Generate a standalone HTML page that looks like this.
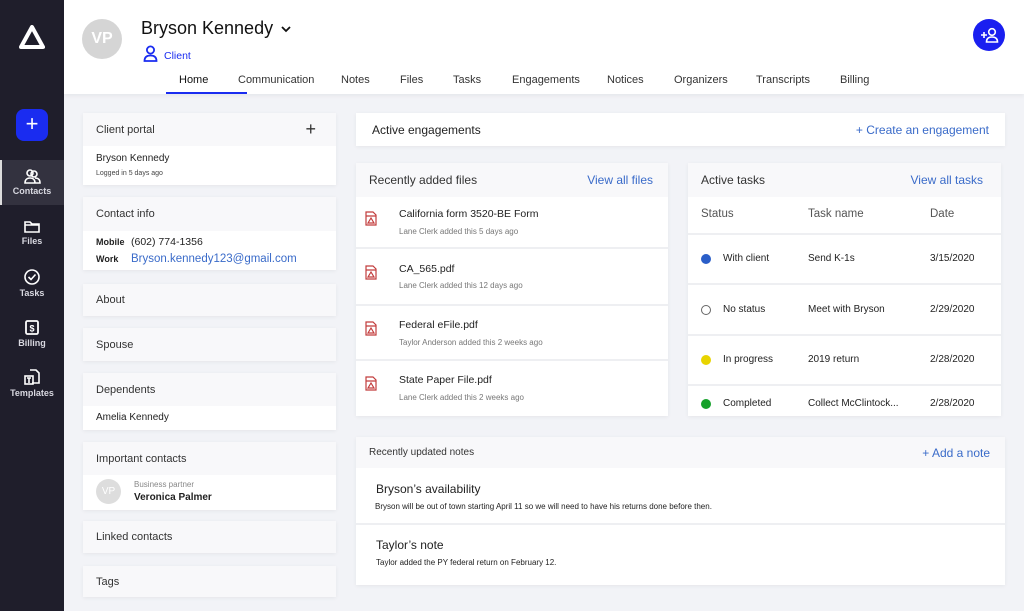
<!DOCTYPE html>
<html><head><meta charset="utf-8"><style>
*{margin:0;padding:0;box-sizing:border-box}
body{width:1024px;height:611px;overflow:hidden;background:#f2f3f7;font-family:"Liberation Sans",sans-serif;color:#222;position:relative}
.a{position:absolute}
.side{left:0;top:0;width:64px;height:611px;background:#1f1e2b}
.nav{position:absolute;left:0;width:64px;text-align:center;color:#d8d8e0;font-size:9px;font-weight:bold}
.nav svg{display:block;margin:0 auto 2px}
.hdr{left:64px;top:0;width:960px;height:94px;background:#fff;box-shadow:0 2px 4px rgba(0,0,0,.05)}
.tab{position:absolute;top:74px;font-size:11px;color:#333}
.card{position:absolute;background:#fff;box-shadow:0 1px 4px rgba(0,0,0,.06)}
.ch{background:#f8f8fa;font-size:11px;color:#333;padding-left:13px;display:flex;align-items:center}
.blue{color:#3a6bc9}
.row{position:absolute;left:0;right:0;border-top:2px solid #eeeff2}
.ft{position:absolute;left:43px;font-size:10.5px;color:#222}
.fs{position:absolute;left:43px;font-size:8px;color:#777}
.dot{position:absolute;left:13px;width:10px;height:10px;border-radius:50%}
.tc{position:absolute;font-size:10px;color:#222}
</style></head><body>
<div class="a side">
 <svg class="a" style="left:19px;top:25px" width="26" height="24" viewBox="0 0 26 24"><path d="M13 2 L24 22 L2 22 Z" fill="none" stroke="#fff" stroke-width="4" stroke-linejoin="round"/></svg>
 <div class="a" style="left:16px;top:109px;width:32px;height:32px;border-radius:8px;background:#1a2cf0;color:#fff;font-size:22px;text-align:center;line-height:30px">+</div>
 <div class="a" style="left:0;top:160px;width:64px;height:45px;background:#33323f;border-left:2px solid #ddd"></div>
 <div class="nav" style="top:168px"><svg width="18" height="16" viewBox="0 0 18 16" fill="none" stroke="#fff" stroke-width="1.6"><circle cx="7" cy="5" r="3"/><circle cx="11" cy="6" r="3"/><path d="M2 15c0-4 3-5 5-5s5 1 5 5zM12 10c3 0 5 1 5 5h-5"/></svg>Contacts</div>
 <div class="nav" style="top:218px"><svg width="18" height="16" viewBox="0 0 18 16" fill="none" stroke="#fff" stroke-width="1.6"><path d="M2 4h5l2 2h7v8H2z M2 7h14"/></svg>Files</div>
 <div class="nav" style="top:268px"><svg width="18" height="18" viewBox="0 0 18 18" fill="none" stroke="#fff" stroke-width="1.6"><circle cx="9" cy="9" r="7"/><path d="M5.5 9l2.5 2.5 4.5-5"/></svg>Tasks</div>
 <div class="nav" style="top:319px"><svg width="18" height="17" viewBox="0 0 18 17" fill="none" stroke="#fff" stroke-width="1.8"><rect x="3" y="2" width="12" height="13" rx="1.5"/><text x="9" y="12.5" font-size="9" fill="#fff" stroke="none" text-anchor="middle" font-family="Liberation Sans" font-weight="bold">$</text></svg>Billing</div>
 <div class="nav" style="top:368px"><svg width="18" height="18" viewBox="0 0 18 18" fill="none" stroke="#fff" stroke-width="1.6"><path d="M7 2h6l3 3v10H9"/><rect x="2" y="8" width="8" height="8"/><path d="M4 10h4M6 10v5"/></svg>Templates</div>
</div>
<div class="a hdr">
 <div class="a" style="left:18px;top:19px;width:40px;height:40px;border-radius:50%;background:#d5d5d5;color:#fff;font-weight:bold;font-size:16px;text-align:center;line-height:40px">VP</div>
 <div class="a" style="left:77px;top:18px;font-size:18px;color:#111">Bryson Kennedy</div>
 <svg class="a" style="left:217px;top:25px" width="10" height="8" viewBox="0 0 10 8"><path d="M1 2l4 4 4-4" stroke="#111" stroke-width="1.8" fill="none"/></svg>
 <svg class="a" style="left:79px;top:45px" width="15" height="17" viewBox="0 0 15 17" fill="none" stroke="#1a2cf0" stroke-width="1.8"><circle cx="7.5" cy="5" r="3.6"/><path d="M1.5 16c0-4 2.5-5.5 6-5.5s6 1.5 6 5.5z"/></svg>
 <div class="a" style="left:100px;top:50px;font-size:10.5px;color:#1a2cf0">Client</div>
 <div class="a" style="left:909px;top:19px;width:32px;height:32px;border-radius:50%;background:#1a1ff0"><svg width="32" height="32" viewBox="0 0 32 32" fill="none" stroke="#fff" stroke-width="1.6"><path d="M8 16h6M11 13v6"/><circle cx="19" cy="13" r="3.3"/><path d="M13.5 23c0-4 2.5-5 5.5-5s5.5 1 5.5 5z"/></svg></div>
 <div class="tab" style="left:115px;color:#111">Home</div>
 <div class="a" style="left:102px;top:92px;width:81px;height:2px;background:#1a2cf0"></div>
 <div class="tab" style="left:174px">Communication</div>
 <div class="tab" style="left:277px">Notes</div>
 <div class="tab" style="left:336px">Files</div>
 <div class="tab" style="left:389px">Tasks</div>
 <div class="tab" style="left:448px">Engagements</div>
 <div class="tab" style="left:543px">Notices</div>
 <div class="tab" style="left:610px">Organizers</div>
 <div class="tab" style="left:692px">Transcripts</div>
 <div class="tab" style="left:776px">Billing</div>
</div>
<!-- left column -->
<div class="card" style="left:83px;top:113px;width:253px;height:72px">
 <div class="ch" style="height:33px">Client portal<span style="position:absolute;right:20px;font-size:18px;font-weight:300">+</span></div>
 <div class="a" style="left:13px;top:40px;font-size:10px">Bryson Kennedy</div>
 <div class="a" style="left:13px;top:57px;font-size:7px;color:#444">Logged in 5 days ago</div>
</div>
<div class="card" style="left:83px;top:197px;width:253px;height:73px">
 <div class="ch" style="height:34px">Contact info</div>
 <div class="a" style="left:13px;top:40px;font-size:9px;font-weight:bold">Mobile</div>
 <div class="a" style="left:48px;top:39px;font-size:10.5px">(602) 774-1356</div>
 <div class="a" style="left:13px;top:57px;font-size:9px;font-weight:bold">Work</div>
 <div class="a blue" style="left:48px;top:56px;font-size:11.5px">Bryson.kennedy123@gmail.com</div>
</div>
<div class="card ch" style="left:83px;top:284px;width:253px;height:32px">About</div>
<div class="card ch" style="left:83px;top:328px;width:253px;height:33px">Spouse</div>
<div class="card" style="left:83px;top:373px;width:253px;height:57px">
 <div class="ch" style="height:33px">Dependents</div>
 <div class="a" style="left:13px;top:39px;font-size:10px">Amelia Kennedy</div>
</div>
<div class="card" style="left:83px;top:442px;width:253px;height:68px">
 <div class="ch" style="height:33px">Important contacts</div>
 <div class="a" style="left:13px;top:37px;width:25px;height:25px;border-radius:50%;background:#ddd;color:#fff;font-size:10px;text-align:center;line-height:25px">VP</div>
 <div class="a" style="left:51px;top:38px;font-size:8px;color:#888">Business partner</div>
 <div class="a" style="left:51px;top:50px;font-size:10px;font-weight:bold">Veronica Palmer</div>
</div>
<div class="card ch" style="left:83px;top:521px;width:253px;height:32px">Linked contacts</div>
<div class="card ch" style="left:83px;top:566px;width:253px;height:31px">Tags</div>
<!-- right -->
<div class="card" style="left:356px;top:113px;width:649px;height:33px">
 <div class="a" style="left:16px;top:10px;font-size:12px">Active engagements</div>
 <div class="a blue" style="right:16px;top:10px;font-size:12px">+ Create an engagement</div>
</div>
<div class="card" style="left:356px;top:163px;width:312px;height:253px">
 <div class="ch" style="height:34px;font-size:12px">Recently added files<span class="blue" style="position:absolute;right:15px">View all files</span></div>
 <div class="row" style="top:34px;border:0;height:50px"></div>
 <div class="ft" style="top:45px">California form 3520-BE Form</div><div class="fs" style="top:64px">Lane Clerk added this 5 days ago</div>
 <div class="row" style="top:84px"></div>
 <div class="ft" style="top:100px">CA_565.pdf</div><div class="fs" style="top:118px">Lane Clerk added this 12 days ago</div>
 <div class="row" style="top:141px"></div>
 <div class="ft" style="top:156px">Federal eFile.pdf</div><div class="fs" style="top:175px">Taylor Anderson added this 2 weeks ago</div>
 <div class="row" style="top:196px"></div>
 <div class="ft" style="top:211px">State Paper File.pdf</div><div class="fs" style="top:230px">Lane Clerk added this 2 weeks ago</div>
 <svg class="a" style="left:9px;top:48px" width="12" height="15" viewBox="0 0 12 15" fill="none" stroke="#c23c3c" stroke-width="1.2"><path d="M1 1h7l3 3v10H1z M1 5h10"/><path d="M3 12l3-5 3 5z"/></svg>
 <svg class="a" style="left:9px;top:102px" width="12" height="15" viewBox="0 0 12 15" fill="none" stroke="#c23c3c" stroke-width="1.2"><path d="M1 1h7l3 3v10H1z M1 5h10"/><path d="M3 12l3-5 3 5z"/></svg>
 <svg class="a" style="left:9px;top:158px" width="12" height="15" viewBox="0 0 12 15" fill="none" stroke="#c23c3c" stroke-width="1.2"><path d="M1 1h7l3 3v10H1z M1 5h10"/><path d="M3 12l3-5 3 5z"/></svg>
 <svg class="a" style="left:9px;top:213px" width="12" height="15" viewBox="0 0 12 15" fill="none" stroke="#c23c3c" stroke-width="1.2"><path d="M1 1h7l3 3v10H1z M1 5h10"/><path d="M3 12l3-5 3 5z"/></svg>
</div>
<div class="card" style="left:688px;top:163px;width:313px;height:253px">
 <div class="ch" style="height:34px;font-size:12px">Active tasks<span class="blue" style="position:absolute;right:18px">View all tasks</span></div>
 <div class="tc" style="left:13px;top:45px;font-size:11.5px;color:#555">Status</div>
 <div class="tc" style="left:120px;top:45px;font-size:11.5px;color:#555">Task name</div>
 <div class="tc" style="left:242px;top:45px;font-size:11.5px;color:#555">Date</div>
 <div class="row" style="top:70px"></div>
 <div class="dot" style="top:91px;background:#2a5ec8"></div><div class="tc" style="left:35px;top:90px">With client</div><div class="tc" style="left:120px;top:90px">Send K-1s</div><div class="tc" style="left:242px;top:90px">3/15/2020</div>
 <div class="row" style="top:120px"></div>
 <div class="dot" style="top:142px;border:1px solid #666"></div><div class="tc" style="left:35px;top:141px">No status</div><div class="tc" style="left:120px;top:141px">Meet with Bryson</div><div class="tc" style="left:242px;top:141px">2/29/2020</div>
 <div class="row" style="top:171px"></div>
 <div class="dot" style="top:192px;background:#e8d400"></div><div class="tc" style="left:35px;top:191px">In progress</div><div class="tc" style="left:120px;top:191px">2019 return</div><div class="tc" style="left:242px;top:191px">2/28/2020</div>
 <div class="row" style="top:221px"></div>
 <div class="dot" style="top:236px;background:#15a12a"></div><div class="tc" style="left:35px;top:235px">Completed</div><div class="tc" style="left:120px;top:235px">Collect McClintock...</div><div class="tc" style="left:242px;top:235px">2/28/2020</div>
</div>
<div class="card" style="left:356px;top:437px;width:649px;height:148px">
 <div class="ch" style="height:31px;font-size:10px">Recently updated notes<span class="blue" style="position:absolute;right:15px;font-size:12px">+ Add a note</span></div>
 <div class="a" style="left:20px;top:45px;font-size:12px">Bryson’s availability</div>
 <div class="a" style="left:19px;top:65px;font-size:8px">Bryson will be out of town starting April 11 so we will need to have his returns done before then.</div>
 <div class="row" style="top:86px"></div>
 <div class="a" style="left:20px;top:101px;font-size:12px">Taylor’s note</div>
 <div class="a" style="left:20px;top:121px;font-size:8px">Taylor added the PY federal return on February 12.</div>
</div>
</body></html>
